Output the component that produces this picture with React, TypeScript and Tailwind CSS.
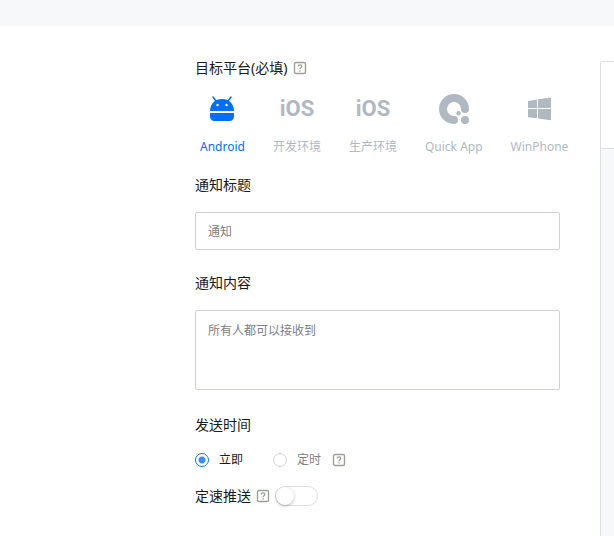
import { useState } from 'react';
import type { ReactNode } from 'react';
import clsx from 'clsx';

const AndroidIcon = () => (
    <svg width="24" height="26" viewBox="0 0 24 26" fill="currentColor" aria-hidden="true">
        <path d="M3 1 6 5M21 1 18 5" stroke="currentColor" strokeWidth="1.500" strokeLinecap="round" />
        <path d="M0 15C.2 7.500 5 3 12 3S23.800 7.500 24 15Z" />
        <path d="M0 17h24v3.500a4.500 4.500 0 0 1-4.500 4.500h-15A4.500 4.500 0 0 1 0 20.500Z" />
        <circle cx="7.500" cy="9" r="1.200" fill="#fff" />
        <circle cx="16.500" cy="9" r="1.200" fill="#fff" />
    </svg>
);

const IosIcon = () => (
    <span
        className="text-[22px] leading-7 font-bold"
        style={{ fontFamily: 'Roboto, "Liberation Sans", sans-serif' }}
    >
        iOS
    </span>
);

const QuickAppIcon = () => (
    <svg width="30" height="30" viewBox="0 0 30 30" fill="currentColor" aria-hidden="true">
        <path
            d="M26 15A11 11 0 1 0 15 26"
            fill="none"
            stroke="currentColor"
            strokeWidth="8"
            strokeLinecap="round"
        />
        <circle cx="19.600" cy="19.300" r="2.200" />
        <circle cx="26" cy="26" r="4" />
    </svg>
);

const WindowsIcon = () => (
    <svg width="24" height="24" viewBox="0 0 24 24" fill="currentColor" aria-hidden="true">
        <path d="M1 4 10 2.500V11H1ZM11 2.300 24 .5V11H11ZM1 12H10V21.300L1 20.300ZM11 12H24V23.200L11 21.500Z" />
    </svg>
);

const HelpButton = ({ label }: { label: string }) => (
    <button type="button" aria-label={label} className="text-[#9b9f99]">
        <svg width="14" height="14" viewBox="0 0 14 14" fill="none" stroke="currentColor" aria-hidden="true">
            <rect x="1.500" y="1.500" width="11" height="11" rx="1.500" strokeWidth="1.400" />
            <path d="M5.200 5.500C5.200 3.400 8.800 3.400 8.800 5.500C8.800 6.800 7 6.700 7 8.200" strokeWidth="1.300" />
            <path d="M7 9.300V10.600" strokeWidth="1.400" />
        </svg>
    </button>
);

const platforms: { id: string; name: string; icon: ReactNode }[] = [
    { id: 'android', name: 'Android', icon: <AndroidIcon /> },
    { id: 'ios-dev', name: '开发环境', icon: <IosIcon /> },
    { id: 'ios-prod', name: '生产环境', icon: <IosIcon /> },
    { id: 'quickapp', name: 'Quick App', icon: <QuickAppIcon /> },
    { id: 'winphone', name: 'WinPhone', icon: <WindowsIcon /> },
];

const radioClass =
    'appearance-none w-3.5 h-3.5 rounded-full border border-[#cdd0dc] bg-white checked:border-[#1472ff] checked:bg-[radial-gradient(circle,#3d8bff_3px,transparent_4px)]';

const fieldClass =
    'block w-full rounded-xs border border-[#cdd0dc] bg-white px-3 text-xs text-[#333] placeholder:text-[#808080] focus:outline-none';

export default function App() {
    const [platform, setPlatform] = useState('android');
    const [timing, setTiming] = useState('now');
    const [constantSpeed, setConstantSpeed] = useState(false);

    return (
        <div
            className="flex min-h-screen flex-col bg-white text-sm leading-5 text-[#1a1a1a]"
            style={{ fontFamily: '"Noto Sans", "Noto Sans CJK SC", sans-serif' }}
        >
            <header className="h-[26px] bg-[#f7f8fa]" />
            <main className="flex flex-1 overflow-hidden pl-[195px]">
                <form className="w-full max-w-[365px] shrink-0 pt-8" onSubmit={(e) => e.preventDefault()}>
                    <div className="flex items-center gap-1.5">
                        <span>目标平台(必填)</span>
                        <HelpButton label="目标平台说明" />
                    </div>
                    <div className="mt-[15px] flex w-max gap-7 pl-[5px]">
                        {platforms.map((p) => (
                            <button
                                key={p.id}
                                type="button"
                                aria-pressed={platform === p.id}
                                onClick={() => setPlatform(p.id)}
                                className={clsx(
                                    'flex flex-col items-center text-xs leading-5',
                                    platform === p.id ? 'text-[#006eff]' : 'text-[#b0b8c1]'
                                )}
                            >
                                <span className="flex h-8 items-center">{p.icon}</span>
                                <span className="mt-3">{p.name}</span>
                            </button>
                        ))}
                    </div>

                    <label htmlFor="title" className="mt-[18px] block">
                        通知标题
                    </label>
                    <input id="title" type="text" placeholder="通知" className={clsx(fieldClass, 'mt-[17px] h-[38px]')} />

                    <label htmlFor="content" className="mt-[23px] block">
                        通知内容
                    </label>
                    <textarea
                        id="content"
                        placeholder="所有人都可以接收到"
                        className={clsx(fieldClass, 'mt-[17px] h-20 resize-none py-2.5 leading-5')}
                    />

                    <fieldset className="mt-[25px]">
                        <legend>发送时间</legend>
                        <div className="mt-[15px] flex items-center text-xs leading-5">
                            <label className="flex items-center gap-2.5">
                                <input
                                    type="radio"
                                    name="timing"
                                    className={radioClass}
                                    checked={timing === 'now'}
                                    onChange={() => setTiming('now')}
                                />
                                立即
                            </label>
                            <label className="ml-[30px] mr-[11px] flex items-center gap-2.5 text-[#808080]">
                                <input
                                    type="radio"
                                    name="timing"
                                    className={radioClass}
                                    checked={timing === 'scheduled'}
                                    onChange={() => setTiming('scheduled')}
                                />
                                定时
                            </label>
                            <HelpButton label="定时说明" />
                        </div>
                    </fieldset>

                    <div className="mt-4 flex items-center gap-[5px]">
                        <label htmlFor="speed">定速推送</label>
                        <HelpButton label="定速推送说明" />
                        <input
                            id="speed"
                            type="checkbox"
                            role="switch"
                            checked={constantSpeed}
                            onChange={(e) => setConstantSpeed(e.target.checked)}
                            className="h-5 w-[43px] appearance-none rounded-full border border-[#dfdfdf] bg-white before:block before:h-[18px] before:w-[18px] before:rounded-full before:bg-white before:shadow-[0_1px_3px_rgba(0,0,0,0.3)] checked:bg-[#006eff] checked:before:ml-auto"
                        />
                    </div>
                </form>

                <aside className="mt-[35px] ml-10 flex min-w-0 flex-1 flex-col rounded-tl-xs border-t border-l border-[#dadde6] bg-[#f7f8fa]">
                    <div className="h-[87px] border-b border-[#dadde6] bg-white" />
                </aside>
            </main>
        </div>
    );
}
